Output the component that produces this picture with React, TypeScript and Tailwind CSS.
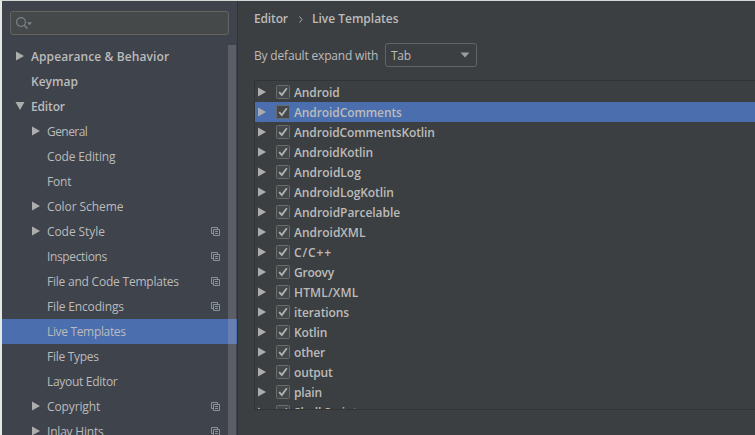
type NavItem = {
  label: string;
  level: 0 | 1;
  arrow?: 'right' | 'down';
  project?: boolean;
  selected?: boolean;
  tracking: string;
};

const navItems: NavItem[] = [
  { label: 'Appearance & Behavior', level: 0, arrow: 'right', tracking: 'tracking-[0.1px]' },
  { label: 'Keymap', level: 0, tracking: 'tracking-normal' },
  { label: 'Editor', level: 0, arrow: 'down', tracking: 'tracking-[-0.15px]' },
  { label: 'General', level: 1, arrow: 'right', tracking: 'tracking-[-0.55px]' },
  { label: 'Code Editing', level: 1, tracking: 'tracking-[-0.15px]' },
  { label: 'Font', level: 1, tracking: 'tracking-[-0.2px]' },
  { label: 'Color Scheme', level: 1, arrow: 'right', tracking: 'tracking-[-0.08px]' },
  { label: 'Code Style', level: 1, arrow: 'right', project: true, tracking: 'tracking-[-0.08px]' },
  { label: 'Inspections', level: 1, project: true, tracking: 'tracking-[-0.36px]' },
  { label: 'File and Code Templates', level: 1, project: true, tracking: 'tracking-[-0.22px]' },
  { label: 'File Encodings', level: 1, project: true, tracking: 'tracking-[-0.16px]' },
  { label: 'Live Templates', level: 1, selected: true, tracking: 'tracking-[-0.34px]' },
  { label: 'File Types', level: 1, tracking: 'tracking-[-0.28px]' },
  { label: 'Layout Editor', level: 1, tracking: 'tracking-[-0.3px]' },
  { label: 'Copyright', level: 1, arrow: 'right', project: true, tracking: 'tracking-[-0.12px]' },
  { label: 'Inlay Hints', level: 1, arrow: 'right', project: true, tracking: 'tracking-[-0.2px]' },
];

const groups: { name: string; tracking: string }[] = [
  { name: 'Android', tracking: 'tracking-[-0.1px]' },
  { name: 'AndroidComments', tracking: 'tracking-[-0.1px]' },
  { name: 'AndroidCommentsKotlin', tracking: 'tracking-[-0.12px]' },
  { name: 'AndroidKotlin', tracking: 'tracking-[-0.1px]' },
  { name: 'AndroidLog', tracking: 'tracking-normal' },
  { name: 'AndroidLogKotlin', tracking: 'tracking-[-0.06px]' },
  { name: 'AndroidParcelable', tracking: 'tracking-[-0.04px]' },
  { name: 'AndroidXML', tracking: 'tracking-normal' },
  { name: 'C/C++', tracking: 'tracking-[0.9px]' },
  { name: 'Groovy', tracking: 'tracking-[-0.25px]' },
  { name: 'HTML/XML', tracking: 'tracking-[0.15px]' },
  { name: 'iterations', tracking: 'tracking-[-0.1px]' },
  { name: 'Kotlin', tracking: 'tracking-[-0.15px]' },
  { name: 'other', tracking: 'tracking-[-0.15px]' },
  { name: 'output', tracking: 'tracking-[-0.15px]' },
  { name: 'plain', tracking: 'tracking-[-0.15px]' },
  { name: 'Shell Script', tracking: 'tracking-[-0.1px]' },
];

function Arrow({ dir }: { dir: 'right' | 'down' }) {
  return (
    <svg width="10" height="10" viewBox="0 0 10 10" className="shrink-0 fill-[#adadad]">
      {dir === 'right' ? <path d="M1 0.5L9 5L1 9.5Z" /> : <path d="M0.5 1H9.5L5 9Z" />}
    </svg>
  );
}

function ProjectIcon() {
  return (
    <svg width="9" height="9" viewBox="0 0 9 9" fill="none" stroke="#87939a" className="mr-2 mb-px shrink-0">
      <path d="M2 6.5H0.5V0.5H6.5V2" />
      <path d="M2.5 2.5H8.5V8.5H2.5Z" />
      <path d="M4 4.5H7M4 6.5H7" />
    </svg>
  );
}

function NavRow({ item }: { item: NavItem }) {
  return (
    <li className={`group flex h-[25px] shrink-0 items-center ${item.selected ? 'bg-[#4b6eaf]' : ''}`}>
      <span className={`flex shrink-0 pb-0.5 ${item.level === 0 ? 'w-[29px] pl-[13px]' : 'w-[45px] pl-[29px]'}`}>
        {item.arrow && <Arrow dir={item.arrow} />}
      </span>
      <span className={`flex-1 whitespace-pre ${item.level === 0 ? 'font-semibold' : ''} ${item.tracking}`}>{item.label}</span>
      {item.project && <ProjectIcon />}
      <span className={`w-2 shrink-0 self-stretch group-first:mt-px ${item.selected ? 'bg-[#6780b2]' : 'bg-[#5b5e66]'}`} />
      <span className="w-px shrink-0" />
    </li>
  );
}

function Checkbox() {
  return (
    <svg width="14" height="14" viewBox="0 0 14 14" fill="none" className="shrink-0">
      <rect x="0.5" y="0.5" width="13" height="13" rx="1" fill="#43494a" stroke="#6b6b6b" />
      <path d="M3.2 7.2L5.8 10L10.8 3.2" stroke="#b4b4b4" strokeWidth="1.8" />
    </svg>
  );
}

export default function App() {
  return (
    <div className="flex h-[435px] w-[755px] overflow-hidden border-t border-l-2 border-t-[#d5d9d5] border-l-[#e6e8e6] bg-[#3c3f41] font-['Open_Sans','Noto_Sans_CJK_KR',sans-serif] text-[12px] leading-none text-[#bbbbbb]">
      <aside className="flex w-[235px] shrink-0 flex-col bg-[#3f434c]">
        <div className="mt-2.5 ml-2 flex h-6 w-[219px] shrink-0 items-center rounded-[3px] border border-[#646464] bg-[#45494a] pl-[5px]">
          <svg width="17" height="13" viewBox="0 0 17 13" fill="none" stroke="#798389">
            <circle cx="5" cy="5" r="4.4" strokeWidth="1.2" />
            <path d="M8.2 8.2L11.4 11.5" strokeWidth="1.5" />
            <path d="M11 5.2H16L13.5 8.2Z" fill="#798389" stroke="none" />
          </svg>
        </div>
        <ul className="mt-[9px] flex flex-col">
          {navItems.map((item) => <NavRow key={item.label} item={item} />)}
        </ul>
      </aside>
      <main className="flex min-w-0 flex-1 flex-col border-l border-[#323232] pl-4">
        <h1 className="mt-[10px] flex h-4 shrink-0 items-center font-semibold">
          <span className="tracking-[-0.15px]">Editor</span>
          <svg width="4" height="7" viewBox="0 0 4 7" fill="none" stroke="#aaaaaa" className="mr-[9px] ml-[11px]">
            <path d="M0.5 0.5L3 3.5L0.5 6.5" />
          </svg>
          <span>Live Templates</span>
        </h1>
        <div className="mt-4 flex h-6 shrink-0 items-center">
          <span className="w-[131px] pt-0.5 tracking-[-0.18px] whitespace-pre">By default expand with</span>
          <div className="flex h-6 w-[92px] items-center justify-between rounded-[3px] border border-[#646464] pr-1.5 pl-[5px]">
            <span className="pt-0.5 tracking-[-0.3px]">Tab</span>
            <svg width="10" height="6" viewBox="0 0 10 6"><path d="M0.5 0.5H9.5L5 5.5Z" fill="#9b9ea0" /></svg>
          </div>
        </div>
        <ul className="mt-[13px] h-[330px] shrink-0 overflow-hidden border-y border-l border-[#313335] pt-px">
          {groups.map(({ name, tracking }, i) => (
            <li key={name} className={`flex h-5 items-center pl-0.5 ${i === 1 ? 'bg-[#4b6eaf]' : ''}`}>
              <span className="mr-[9px] flex pb-px"><Arrow dir="right" /></span>
              <Checkbox />
              <span className={`ml-1 pt-0.5 font-semibold ${tracking}`}>{name}</span>
            </li>
          ))}
        </ul>
      </main>
    </div>
  );
}
